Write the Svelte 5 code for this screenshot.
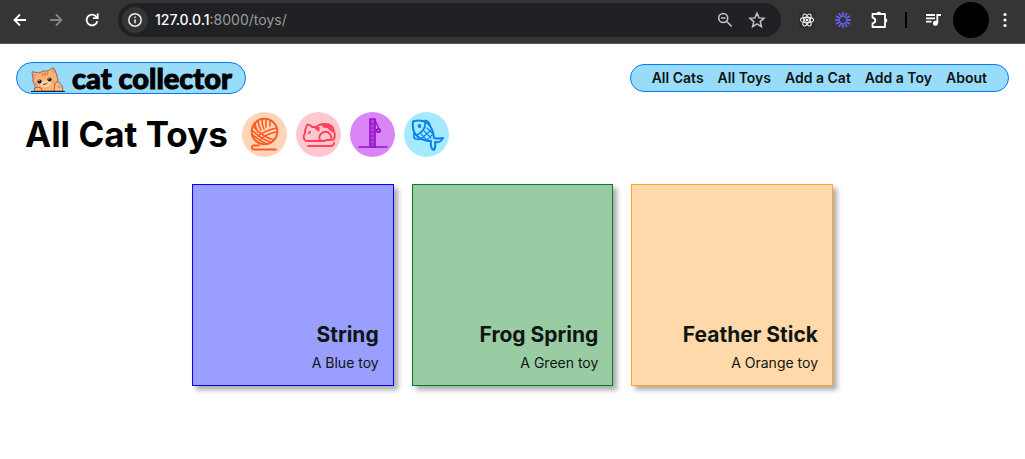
<script>
  const links = ['All Cats', 'All Toys', 'Add a Cat', 'Add a Toy', 'About'];
  const toys = [
    { name: 'String', color: 'Blue', tone: 'blue' },
    { name: 'Frog Spring', color: 'Green', tone: 'green' },
    { name: 'Feather Stick', color: 'Orange', tone: 'orange' }
  ];
  const rays = Array.from({ length: 12 }, (_, i) => i * 30);
</script>

<div class="toolbar">
  <button class="tool" aria-label="Back">
    <svg width="16" height="16" viewBox="0 0 16 16" fill="none" stroke="#fff" stroke-width="1.8"><path d="M14 8H3M8 2.500L2.500 8L8 13.500" /></svg>
  </button>
  <button class="tool" aria-label="Forward">
    <svg width="16" height="16" viewBox="0 0 16 16" fill="none" stroke="#858585" stroke-width="1.8"><path d="M2 8H13M8 2.500L13.500 8L8 13.500" /></svg>
  </button>
  <button class="tool" aria-label="Reload">
    <svg width="16" height="16" viewBox="0 0 16 16" fill="none" stroke="#fff" stroke-width="1.8"><path d="M13.300 9.200A5.400 5.400 0 1 1 12 4.300L13.500 5.800" /><path d="M13.700 1.500V6.200H9" /></svg>
  </button>
  <div class="address">
    <button class="info" aria-label="Site information">
      <svg width="16" height="16" viewBox="0 0 16 16" fill="none" stroke="#eee" stroke-width="1.5"><circle cx="8" cy="8" r="6.200" /><path d="M8 7.200V11.300M8 4.600V6.100" /></svg>
    </button>
    <span class="url"><b>127.0.0.1</b>:8000/toys/</span>
    <button class="inner" aria-label="Zoom">
      <svg width="16" height="16" viewBox="0 0 16 16" fill="none" stroke="#c4c4c4" stroke-width="1.600"><circle cx="6.200" cy="6" r="4.500" /><path d="M9.500 9.300L14.700 14.500M4 6H8.400" /></svg>
    </button>
    <button class="inner" aria-label="Bookmark">
      <svg width="18" height="18" viewBox="0 0 18 18" fill="none" stroke="#c4c4c4" stroke-width="1.500"><path d="M9 2.200L11 6.900L16 7.300L12.200 10.600L13.400 15.600L9 12.900L4.600 15.600L5.800 10.600L2 7.300L7 6.900Z" /></svg>
    </button>
  </div>
  <button class="tool" aria-label="React tools">
    <svg width="16" height="16" viewBox="0 0 16 16"><rect width="16" height="16" rx="1" fill="#2d2d2d" /><g fill="none" stroke="#eee" stroke-width="1.100"><ellipse cx="8" cy="8" rx="6.600" ry="2.600" /><ellipse cx="8" cy="8" rx="6.600" ry="2.600" transform="rotate(60 8 8)" /><ellipse cx="8" cy="8" rx="6.600" ry="2.600" transform="rotate(120 8 8)" /></g><circle cx="8" cy="8" r="1.300" fill="#fff" /></svg>
  </button>
  <button class="tool" aria-label="Burst extension">
    <svg width="18" height="18" viewBox="0 0 18 18" stroke="#6260f5" stroke-width="1.700">{#each rays as a}<path d="M9 1V6" transform="rotate({a} 9 9)" />{/each}</svg>
  </button>
  <button class="tool" aria-label="Extensions">
    <svg width="20" height="20" viewBox="0 0 20 20" fill="none" stroke="#fff" stroke-width="1.800" stroke-linejoin="round"><path d="M3.500 4H16V17H3.500V13.300C5.700 12.900 6.300 11.900 6.300 10.500C6.300 9.100 5.700 8.100 3.500 7.700Z" /><path d="M7.500 4A2.300 2.300 0 0 1 12.100 4ZM16 8.200A2.300 2.300 0 0 1 16 12.800Z" fill="#fff" stroke="none" /></svg>
  </button>
  <span class="divider"></span>
  <button class="tool" aria-label="Media">
    <svg width="18" height="16" viewBox="0 0 18 16" fill="none" stroke="#fff" stroke-width="1.800"><path d="M2 3H11M2 6.300H11M2 9.600H7.500M13.300 11V3H17" /><circle cx="11.400" cy="11.200" r="2.500" fill="#fff" stroke="none" /></svg>
  </button>
  <button class="avatar" aria-label="Profile"></button>
  <button class="menu" aria-label="Menu">
    <svg width="4" height="16" viewBox="0 0 4 16" fill="#fff"><circle cx="2" cy="2.500" r="1.600" /><circle cx="2" cy="8" r="1.600" /><circle cx="2" cy="13.500" r="1.600" /></svg>
  </button>
</div>

<header>
  <a class="logo" href="#home">
    <svg width="36" height="26" viewBox="0 0 36 26">
      <g stroke="#50302b" stroke-width=".6" stroke-linejoin="round">
        <path fill="#fcb273" d="M5 24Q5 20 5 18Q2 15 3 11L2 6Q2 4 4 5L9 6Q13 3 18 4L22 1Q24 0 25 3L27 9Q29 13 27 17V24Z" />
        <path fill="#ffbd80" d="M24 24L25 17Q27 13 30 16L32 19L33 24ZM4 24Q4 20 8 20Q12 20 12 24Z" />
      </g>
      <path fill="#f58d88" d="M3 6L7 8L4 11ZM21 4L24 2L25 7Z" />
      <path fill="#ffd4a3" d="M10 16Q16 11 21 15Q20 20 15 20Q10 20 10 16Z" />
      <path d="M12 6L13 9M15 5L15 9M18 5L17 8" stroke="#dd7440" stroke-width="1.200" />
      <circle cx="9.500" cy="14.500" r="2.100" fill="#171820" /><circle cx="19.500" cy="12.500" r="2.100" fill="#171820" />
      <circle cx="9" cy="13.700" r=".6" fill="#fff" /><circle cx="19" cy="11.700" r=".6" fill="#fff" />
      <circle cx="6.500" cy="17.500" r="1.400" fill="#fa9186" /><circle cx="24" cy="15" r="1.400" fill="#fa9186" />
      <path d="M13 17Q14.500 19 15 16.500Q16 18 17.500 16" stroke="#5b2028" stroke-width=".9" fill="none" />
      <path d="M27 20Q29 16 31 20Q29 22 27 20Z" fill="#f58d88" />
      <path d="M1 24.500H35" stroke="#17232a" />
    </svg>
    <span>cat collector</span>
  </a>
  <nav aria-label="Main">
    {#each links as link}<a href="#{link.replaceAll(' ', '-')}">{link}</a>{/each}
  </nav>
</header>

<main>
  <div class="heading">
    <h1>All Cat Toys</h1>
    <div class="badges">
      <svg class="badge yarn" viewBox="0 0 45 45" fill="none" stroke="#ff5a1f" stroke-width="1.600" stroke-linecap="round" stroke-linejoin="round">
        <circle cx="22.500" cy="19.500" r="12.800" stroke-width="2" />
        <path d="M13 12Q14 17 16 20M16 9.500Q17 15 19 18M20 8Q20 13 22 17M24 8V15M28 9V14M10 18Q20 28 29 30M11 23Q17 29 25 32M12 15Q21 25 32 28M35 16Q24 18 16 24M35 20Q26 21 19 27" />
        <path d="M17 33.500H12Q10 33.500 10 35.500T12 37.500H34" stroke-width="1.900" />
      </svg>
      <svg class="badge bed" viewBox="0 0 45 45" fill="none" stroke="#ff4258" stroke-width="1.900" stroke-linecap="round" stroke-linejoin="round">
        <path d="M29 29H10Q6 26 9 21Q9 17 10 16L11 13Q14 12 16 15L20 15L23 13Q26 12 29 12Q37 12 38 19Q40 25 37 28M24 28Q22 24 26 21Q31 18 34 22Q36 25 35 28H30M14 20L13 21" />
        <path d="M26 13Q35 10 37 20Q33 18 31 15Q28 17 26 13ZM19 16L23 15L23 19Z" fill="#ff4258" stroke-width="1" />
        <path d="M12 34H34Q38 34 38 31" />
      </svg>
      <svg class="badge post" viewBox="0 0 45 45" fill="none" stroke="#9416c8" stroke-width="1.700">
        <path d="M9 35H37" stroke-linecap="round" /><path d="M20 7H25V35H20Z" fill="#ae46d7" />
        <path d="M20 12H25M20 16H25M20 20H25M20 24H25M20 28H25M20 32H25" stroke-width="1" />
        <path d="M25 8L29 17" stroke-width="1.300" /><circle cx="28.500" cy="18.500" r="1.700" />
        <path d="M27 17L26 20" stroke-width="1" />
      </svg>
      <svg class="badge fish" viewBox="0 0 45 45" fill="none" stroke="#0784ef" stroke-width="2" stroke-linecap="round" stroke-linejoin="round">
        <path d="M9 9.500Q17 7 23 11Q29 15 30 26Q34 27 39 26Q37 31 31 30Q32 35 30 38Q26 37 27 29Q18 29 12 23Q8 18 9 9.500Z" />
        <path d="M21 11Q22 18 13 23M18 9Q24 7 26 13M10 21L10 26Q13 28 17 27" stroke-width="1.700" />
        <path d="M20 19L27 26M23 16L28 21M17 22L22 27M27 18L18 26M29 22L23 28" stroke-width="1.100" />
        <circle cx="15.500" cy="14" r="1.900" fill="#0784ef" stroke="none" />
      </svg>
    </div>
  </div>
  <section class="toys" aria-label="Toys">
    {#each toys as toy}
      <a class="card {toy.tone}" href="#{toy.tone}">
        <h2>{toy.name}</h2>
        <p>A {toy.color} toy</p>
      </a>
    {/each}
  </section>
</main>

<style>
  :global(body) { background: #fff; font-family: Inter, sans-serif; color: #0f1512; }
  button { border: 0; padding: 0; background: none; display: flex; align-items: center; justify-content: center; flex: none; }
  a { color: inherit; text-decoration: none; }
  svg { display: block; flex: none; }
  .toolbar { display: flex; align-items: center; box-sizing: border-box; height: 44px; padding: 0 4px 4px 2px; background: #353535; border-bottom: 1px solid #5a5758; }
  .tool { width: 36px; height: 36px; }
  .address { flex: 1; display: flex; align-items: center; height: 34px; margin: 0 8px; padding: 0 8px 0 4px; border-radius: 17px; background: #202124; }
  .info { width: 26px; height: 26px; border-radius: 50%; background: #353535; }
  .url { flex: 1; margin-left: 7px; font-family: Roboto, sans-serif; font-size: 14px; line-height: 20px; color: #9b9b9b; font-family: Inter, sans-serif; }
  .url b { font-weight: 500; color: #fff; }
  .inner { width: 32px; height: 32px; }
  .divider { width: 2px; height: 16px; margin: 0 8px; background: #000; }
  .avatar { width: 36px; height: 36px; margin: 0 0 0 2px; border-radius: 50%; background: #000; }
  .menu { width: 32px; height: 36px; }
  header { display: flex; justify-content: space-between; align-items: center; padding: 18px 16px 0; }
  .logo { display: flex; align-items: flex-end; box-sizing: border-box; height: 32px; padding: 0 13px; gap: 6px; border: 1px solid #0878f5; border-radius: 16px; background: #99dcfa; color: #000; }
  .logo span { font-family: Lato, sans-serif; font-size: 29px; font-weight: 900; line-height: 30px; -webkit-text-stroke: 1px #000; stroke-linejoin: round; }
  nav { display: flex; gap: 14px; padding: 3px 21px; border: 1px solid #0878f5; border-radius: 14px; background: #99dcfa; font-size: 14px; font-weight: 600; line-height: 20px; }
  .heading { display: flex; align-items: center; gap: 14px; padding: 18px 25px 0; }
  h1 { margin: 0; font-size: 35px; font-weight: 700; line-height: 45px; color: #000; }
  .badges { display: flex; gap: 9px; }
  .badge { width: 45px; height: 45px; border-radius: 50%; }
  .yarn { background: #ffd5b8; }
  .bed { background: #ffc8cf; }
  .post { background: #d985f7; }
  .fish { background: #a6eaff; }
  .toys { display: grid; grid-template-columns: repeat(3, 1fr); gap: 18px; max-width: 641px; margin: 27px auto 0; padding-bottom: 60px; }
  .card { display: flex; flex-direction: column; justify-content: flex-end; aspect-ratio: 1; box-sizing: border-box; padding: 13px 14px; border: 1px solid; text-align: right; box-shadow: 4px 4px 5px #0005; }
  h2 { margin: 0; font-size: 21px; font-weight: 700; line-height: 26px; }
  p { margin: 6px 0 0; font-size: 14px; line-height: 18px; }
  .blue { background: #999eff; border-color: #0000ff; }
  .green { background: #99cca3; border-color: #008018; }
  .orange { background: #ffd9a9; border-color: #ffa52b; }
</style>
